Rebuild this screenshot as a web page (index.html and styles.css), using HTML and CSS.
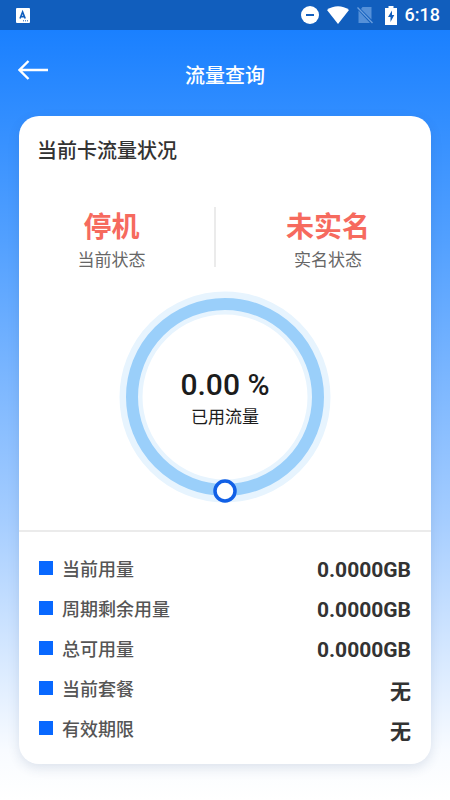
FILE: index.html
```html
<!DOCTYPE html>
<html lang="zh-CN">
    <head>
        <meta charset="utf-8">
        <meta name="viewport" content="width=device-width, initial-scale=1">
        <title>流量查询</title>
        <link rel="stylesheet" href="styles.css">
    </head>
    <body>
        <div class="statusbar">
            <svg class="app-icon" width="14" height="15" viewBox="0 0 14 15">
                <rect width="14" height="15" rx="1" fill="#fff"/>
                <path d="M4 10.5L6.6 4L9.2 10.5M5 8.6h3.2" fill="none" stroke="#115ebd" stroke-width="1.6"/>
                <path d="M7 12.8h5" stroke="#115ebd" stroke-width="1" stroke-dasharray="1 1"/>
            </svg>
            <svg width="18" height="18" viewBox="0 0 18 18">
                <circle cx="9" cy="9" r="9" fill="#fff"/>
                <rect x="5" y="8" width="8" height="2" fill="#115ebd"/>
            </svg>
            <svg class="wifi" width="22" height="18" viewBox="0 0 22 18">
                <path d="M0 4C6.500-.9 15.500-.9 22 4L11 18z" fill="#fff"/>
            </svg>
            <svg class="sim" width="16" height="18" viewBox="0 0 16 18">
                <path d="M5.500 1H14.500V13.500L4 3z M1.500 4.500L13 17H1.500z" fill="#5590d8"/>
                <path d="M.5 1.500L15.500 17" stroke="#6c9fdd" stroke-width="1.300"/>
            </svg>
            <svg class="battery" width="12" height="19" viewBox="0 0 12 19">
                <path d="M3.500 0h5v2H12v17H0V2h3.500z" fill="#fff"/>
                <path d="M7 4.500L3 11h2.500v5L9.300 9H7z" fill="#115ebd"/>
            </svg>
            <span class="time">6:18</span>
        </div>
        <header class="header">
            <a class="back" href="#" aria-label="返回">
                <svg width="30" height="20" viewBox="0 0 30 20">
                    <path d="M10.500 1L1.500 10L10.500 19M1.500 10H30" fill="none" stroke="#fff" stroke-width="2.400"/>
                </svg>
            </a>
            <h1>流量查询</h1>
        </header>
        <main class="card">
            <h2>当前卡流量状况</h2>
            <div class="status">
                <div class="status-item">
                    <strong>停机</strong>
                    <span>当前状态</span>
                </div>
                <div class="status-item">
                    <strong>未实名</strong>
                    <span>实名状态</span>
                </div>
            </div>
            <div class="gauge">
                <svg width="212" height="212" viewBox="0 0 212 212">
                    <circle cx="106" cy="106" r="94" fill="none" stroke="#e7f4fe" stroke-width="23"/>
                    <circle cx="106" cy="106" r="93" fill="none" stroke="#9acffa" stroke-width="12"/>
                    <circle cx="106" cy="200" r="10" fill="#fff" stroke="#1160e6" stroke-width="3.500"/>
                </svg>
                <div class="gauge-text">
                    <strong>0.00 %</strong>
                    <span>已用流量</span>
                </div>
            </div>
            <dl class="usage">
                <div class="row"><dt>当前用量</dt><dd>0.0000GB</dd></div>
                <div class="row"><dt>周期剩余用量</dt><dd>0.0000GB</dd></div>
                <div class="row"><dt>总可用量</dt><dd>0.0000GB</dd></div>
                <div class="row"><dt>当前套餐</dt><dd>无</dd></div>
                <div class="row"><dt>有效期限</dt><dd>无</dd></div>
            </dl>
        </main>
    </body>
</html>
```
FILE: styles.css
```css
* {
    box-sizing: border-box;
}
html {
    background: #fff;
}
body {
    margin: 0;
    min-height: 100vh;
    font-family: Roboto, "Noto Sans CJK SC", sans-serif;
    color: #333;
    background: linear-gradient(#1a80ff 30px, #328eff 120px, #52a0ff 240px, #a5cdff 520px, #f8fbff 750px, #fff);
}
/* Phone status bar */
.statusbar {
    display: flex;
    align-items: center;
    height: 30px;
    padding: 0 10px 0 16px;
    background: #115ebd;
}
.app-icon {
    margin-right: auto;
}
.wifi {
    margin-left: 8px;
}
.sim {
    margin-left: 8px;
}
.battery {
    margin-left: 12px;
}
.time {
    margin-left: 8px;
    font-size: 18px;
    font-weight: 500;
    line-height: 30px;
    color: #fff;
}
.header {
    display: grid;
    grid-template-columns: 60px 1fr 60px;
    height: 86px;
    padding: 0 18px;
}
.back {
    padding-top: 30px;
}
.back svg {
    display: block;
}
h1 {
    margin: 0;
    font-size: 20px;
    font-weight: 500;
    line-height: 92px;
    text-align: center;
    color: #fff;
}
.card {
    margin: 0 19px;
    background: #fff;
    border-radius: 20px;
    box-shadow: 0 4px 12px rgba(40, 70, 120, 0.14);
}
h2 {
    margin: 0;
    padding: 20px 18px 0;
    font-size: 20px;
    font-weight: 500;
    line-height: 30px;
}
/* Two states with a divider between */
.status {
    display: grid;
    grid-template-columns: 1fr 1fr;
    margin: 41px 0 24px;
}
.status-item {
    display: flex;
    flex-direction: column;
    align-items: center;
    height: 60px;
}
.status-item:first-child {
    margin-right: 9px;
    padding-right: 10px;
    border-right: 2px solid #ebebeb;
}
.status-item strong {
    font-size: 28px;
    font-weight: 700;
    line-height: 42px;
    color: #f66a5e;
}
.status-item span {
    font-size: 17px;
    line-height: 22px;
    color: #666;
}
/* Ring gauge */
.gauge {
    display: grid;
    justify-items: center;
    align-items: center;
    padding-bottom: 27px;
}
.gauge svg, .gauge-text {
    grid-area: 1 / 1;
}
.gauge-text {
    display: flex;
    flex-direction: column;
    align-items: center;
    padding-top: 3px;
    color: #1c1c1c;
}
.gauge-text strong {
    font-size: 30px;
    font-weight: 500;
    line-height: 36px;
}
.gauge-text span {
    font-size: 17px;
    line-height: 28px;
}
.usage {
    margin: 0;
    padding: 16px 20px;
    border-top: 2px solid #ebebeb;
}
.row {
    display: flex;
    align-items: center;
    justify-content: space-between;
    height: 40px;
}
dt {
    display: flex;
    align-items: center;
    gap: 9px;
    font-size: 18px;
    font-weight: 500;
    color: #555;
}
dt::before {
    content: "";
    width: 14px;
    height: 14px;
    background: #0868ff;
}
dd {
    margin: 0;
    padding-top: 4px;
    font-size: 21px;
    font-weight: 700;
}
```
